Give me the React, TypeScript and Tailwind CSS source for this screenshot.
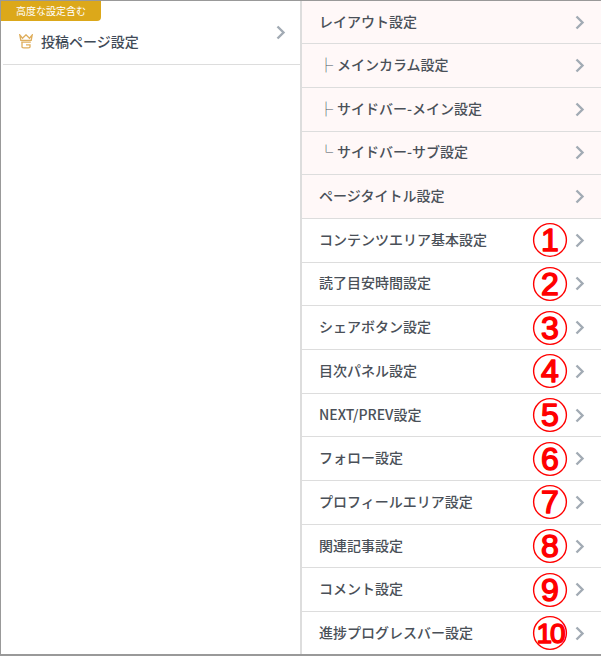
const JP = { fontFamily: '"Noto Sans CJK JP", "Noto Sans", sans-serif' };

type Row = { label: string; tree?: string; tinted?: boolean; num?: number };

const rows: Row[] = [
  { label: "レイアウト設定", tinted: true },
  { label: "メインカラム設定", tree: "├", tinted: true },
  { label: "サイドバー-メイン設定", tree: "├", tinted: true },
  { label: "サイドバー-サブ設定", tree: "└", tinted: true },
  { label: "ページタイトル設定", tinted: true },
  { label: "コンテンツエリア基本設定", num: 1 },
  { label: "読了目安時間設定", num: 2 },
  { label: "シェアボタン設定", num: 3 },
  { label: "目次パネル設定", num: 4 },
  { label: "NEXT/PREV設定", num: 5 },
  { label: "フォロー設定", num: 6 },
  { label: "プロフィールエリア設定", num: 7 },
  { label: "関連記事設定", num: 8 },
  { label: "コメント設定", num: 9 },
  { label: "進捗プログレスバー設定", num: 10 },
];

function Arrow() {
  return (
    <svg width="10" height="15" viewBox="0 0 10 15" fill="none" stroke="#a2abb4" strokeWidth="2.4" className="shrink-0">
      <path d="M1.5 1.5 L7.5 7.5 L1.5 13.5" />
    </svg>
  );
}

function Crown() {
  return (
    <svg width="14" height="15" viewBox="0 0 14 15" fill="none" stroke="#dfae5c" strokeWidth="1.3" className="shrink-0">
      <path d="M0.8 1 L3.5 4.2 L7 0.8 L10.5 4.2 L13.2 1 L12.2 6.4 H1.8 Z" />
      <path d="M2.2 8.2 H11.8 M3 8.2 V13 C3 14.2 11 14.2 11 13 V10.8 H7" />
    </svg>
  );
}

// red hand-drawn style number in a circle, sits over the row
function Num({ n }: { n: number }) {
  return (
    <svg width="36" height="36" viewBox="0 0 36 36" className="absolute left-[230px] top-1/2 -translate-y-1/2">
      <circle cx="18" cy="18" r="16.4" fill="none" stroke="#ff0000" strokeWidth="1.4" />
      <text
        x="18"
        y={n === 10 ? 28 : 29}
        textAnchor="middle"
        fill="#ff0000"
        stroke="#ff0000"
        strokeWidth="1.5"
        strokeLinejoin="round"
        fontSize={n === 10 ? 28 : 32}
        letterSpacing={n === 10 ? -2 : 0}
        fontFamily='"Liberation Sans", sans-serif'
      >
        {n}
      </text>
    </svg>
  );
}

export default function App() {
  return (
    <div className="w-[601px] h-[656px] overflow-hidden bg-white border-t border-l border-b-2 border-[#999999] flex" style={JP}>
      <div className="w-[299px] shrink-0">
        <div className="relative h-[64px] border-b border-[#dddddd] ml-[2px] flex items-center">
          <span className="absolute -left-[2px] top-0 w-[100px] h-[20px] bg-[#dca81a] rounded-br-[4px] text-white text-[10px] leading-[20px] text-center">
            高度な設定含む
          </span>
          <div className="flex items-center w-full pl-[16px] pr-[14px] pt-[18px]">
            <Crown />
            <span className="ml-[8px] text-[14px] font-medium text-[#3f4a57] flex-1 whitespace-nowrap">投稿ページ設定</span>
            <span className="-mt-[18px]">
              <Arrow />
            </span>
          </div>
        </div>
      </div>
      <div className="flex-1 border-l-2 border-[#dddddd]">
        {rows.map((r, i) => (
          <div
            key={r.label}
            className={
              "relative flex items-center pl-[17px] pr-[16px] " +
              (i === 0 ? "h-[43.2px] " : i === rows.length - 1 ? "h-[42px] " : "h-[43.7px] ") +
              (i < rows.length - 1 ? "border-b border-[#dddddd] " : "") +
              (r.tinted ? "bg-[#fff8f8]" : "bg-white")
            }
          >
            {r.tree && <span className="text-[14px] text-[#4a5560] w-[18px] -mt-[2px] shrink-0 overflow-hidden whitespace-nowrap">{r.tree}</span>}
            <span className="text-[14px] font-medium text-[#4a5058] flex-1 -mt-[2px] whitespace-nowrap">{r.label}</span>
            {r.num && <Num n={r.num} />}
            <Arrow />
          </div>
        ))}
      </div>
    </div>
  );
}
